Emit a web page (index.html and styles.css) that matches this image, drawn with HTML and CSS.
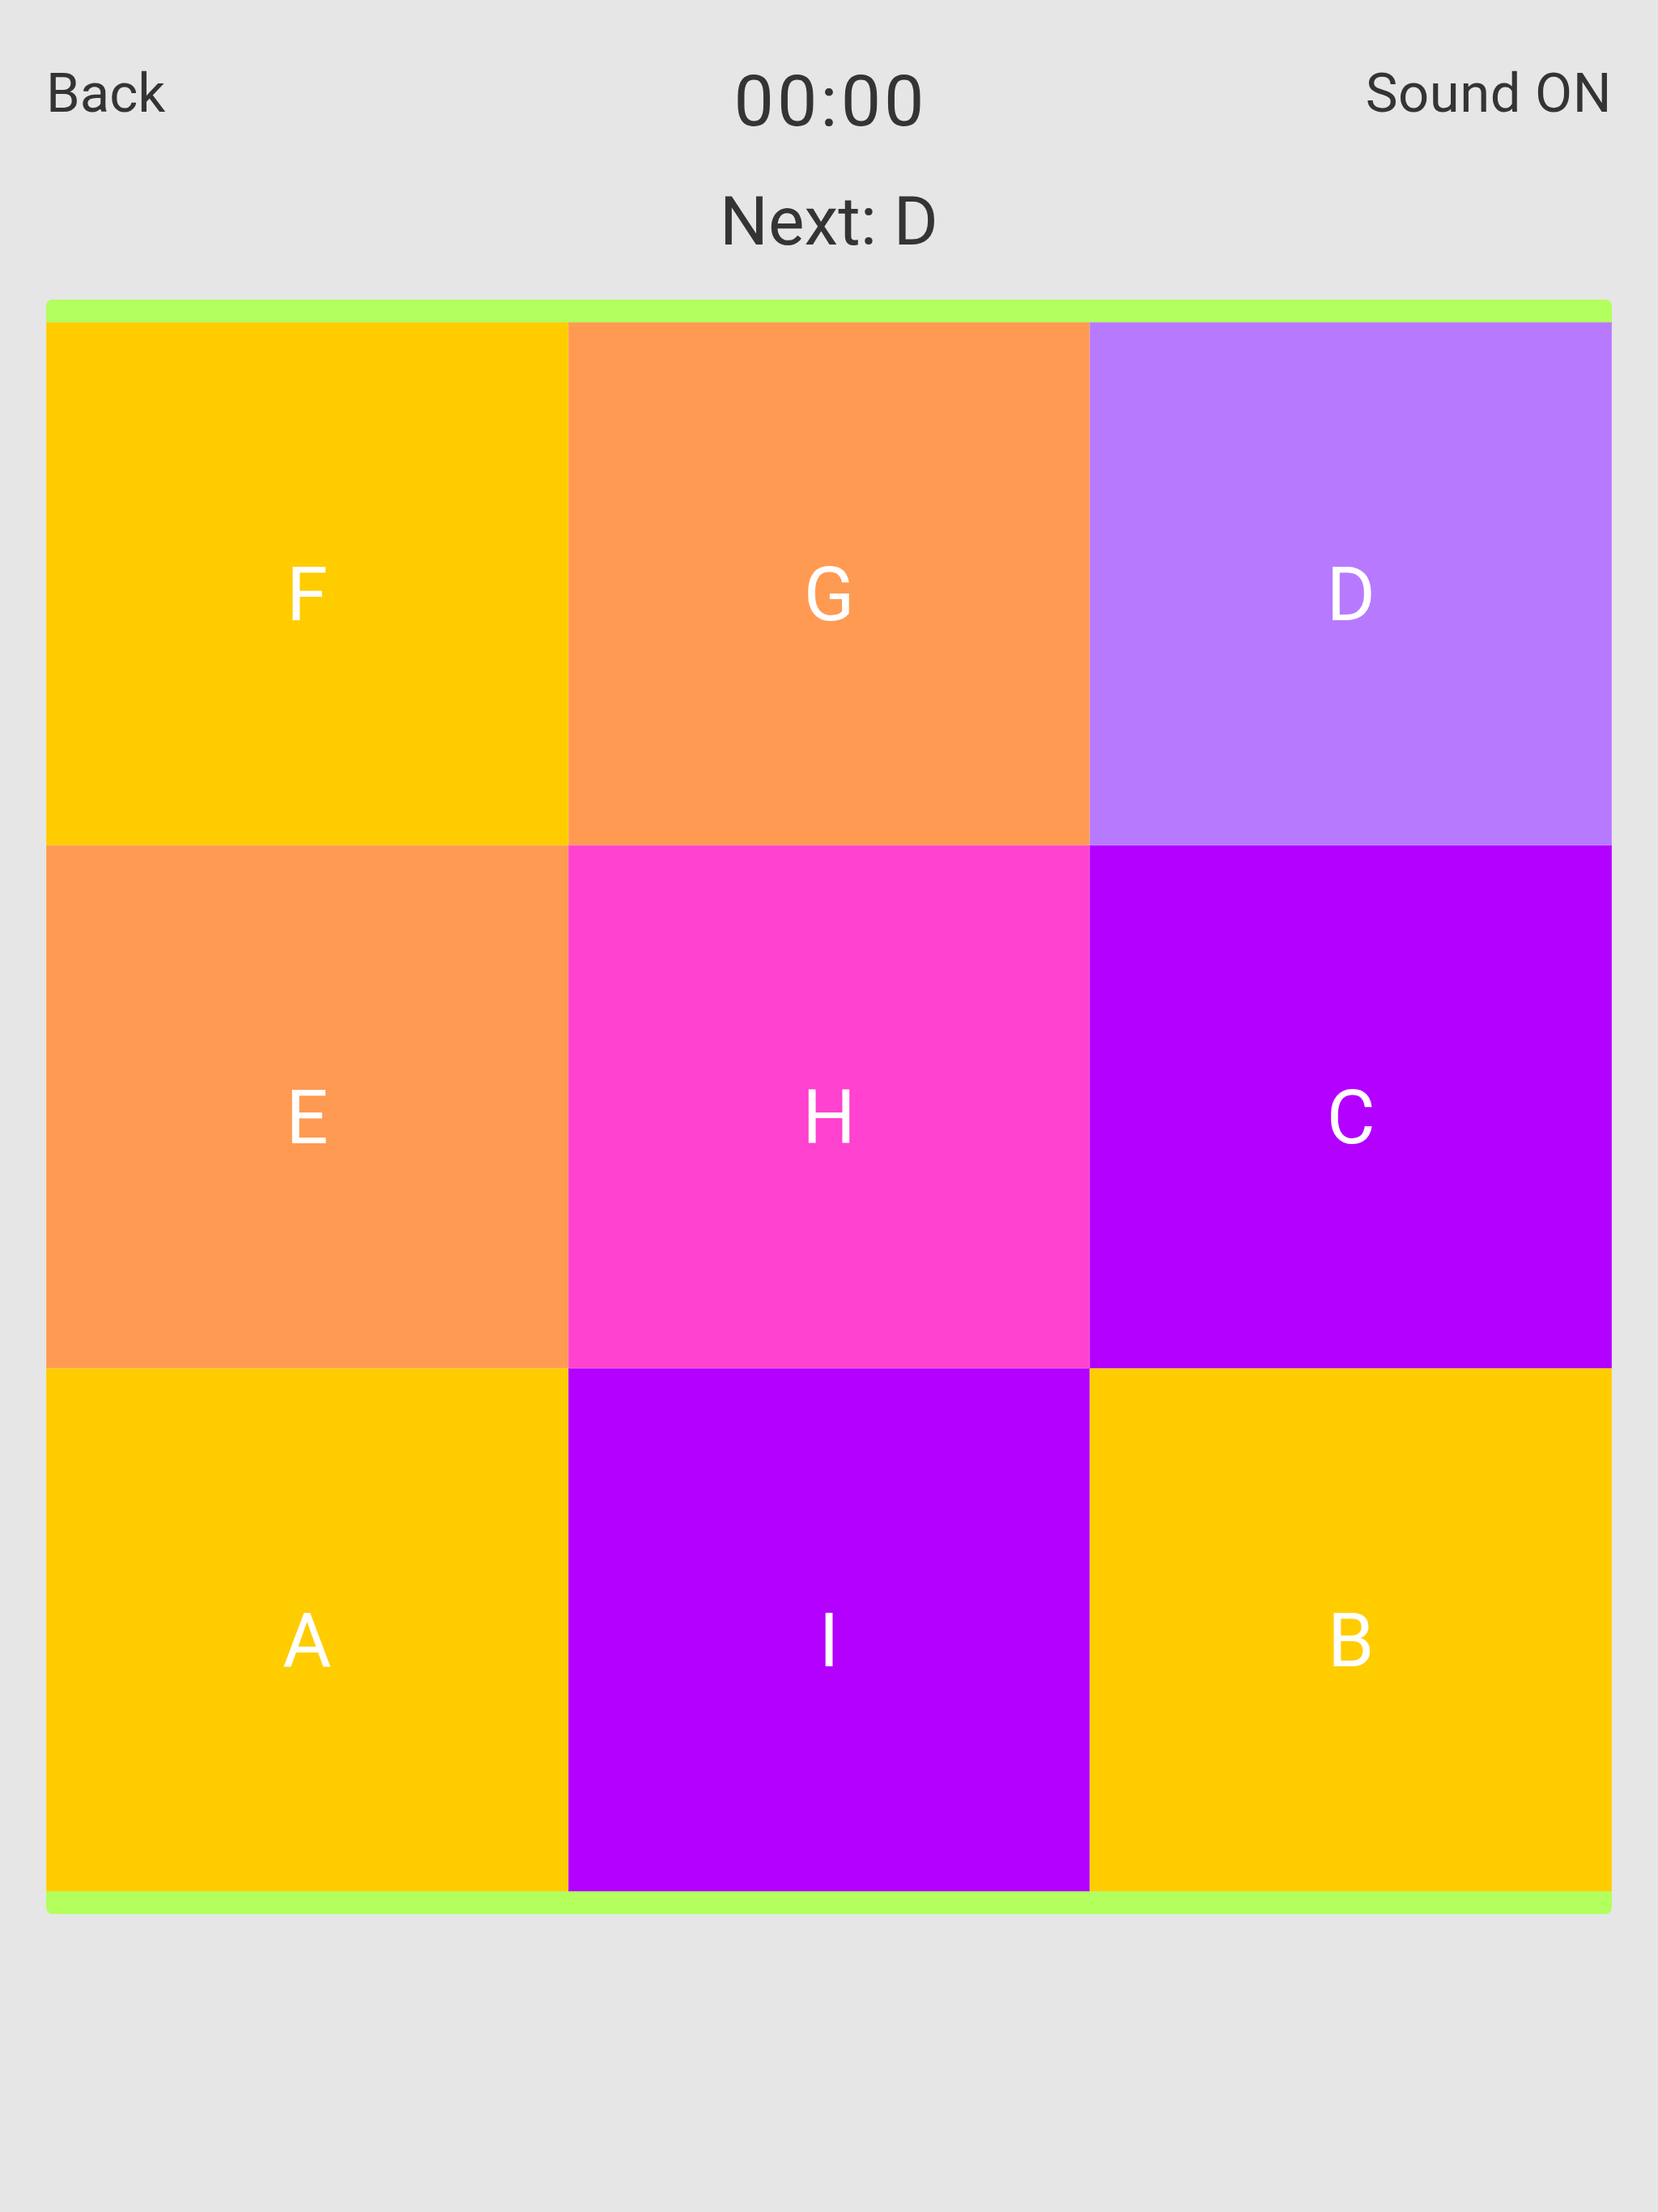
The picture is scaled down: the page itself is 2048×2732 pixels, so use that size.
FILE: index.html
```html
<!DOCTYPE html>
<html lang="en">
<head>
<meta charset="utf-8">
<title>Tiles</title>
<link rel="stylesheet" href="styles.css">
</head>
<body>
<div class="page">
  <header class="topbar">
    <div class="back">Back</div>
    <div class="timer">00:00</div>
    <div class="sound">Sound ON</div>
  </header>
  <div class="next">Next: D</div>
  <div class="board">
    <div class="grid">
      <div class="tile yellow">F</div>
      <div class="tile orange">G</div>
      <div class="tile lavender">D</div>
      <div class="tile orange">E</div>
      <div class="tile pink">H</div>
      <div class="tile purple">C</div>
      <div class="tile yellow">A</div>
      <div class="tile purple">I</div>
      <div class="tile yellow">B</div>
    </div>
  </div>
</div>
</body>
</html>
```

FILE: styles.css
```css
html, body {
  margin: 0;
  padding: 0;
  background: #e6e6e6;
}
body {
  width: 2048px;
  height: 2732px;
  font-family: Roboto, "Liberation Sans", sans-serif;
  color: #343434;
}
.page {
  padding: 75px 57px 0 57px;
}
.topbar {
  display: flex;
  justify-content: space-between;
  align-items: flex-start;
}
.back, .sound {
  flex: 1 1 0;
  font-size: 67px;
  line-height: 80px;
}
.sound {
  text-align: right;
  letter-spacing: 0.5px;
}
.timer {
  font-size: 88px;
  line-height: 100px;
  letter-spacing: 4px;
  padding-left: 4px;
  text-align: center;
}
.next {
  margin-top: 49px;
  font-size: 84px;
  line-height: 100px;
  text-align: center;
}
.board {
  margin-top: 46px;
  background: #b2ff5d;
  border-radius: 8px;
  padding: 28px 0;
}
.grid {
  display: grid;
  grid-template-columns: repeat(3, 1fr);
  grid-template-rows: repeat(3, 646px);
}
.tile {
  display: flex;
  align-items: center;
  justify-content: center;
  padding-top: 26px;
  box-sizing: border-box;
  color: #ffffff;
  font-size: 92px;
  box-shadow: inset 0 0 0 1px rgba(255, 255, 255, 0.12);
}
.yellow { background: #ffcc00; }
.orange { background: #ff9a52; }
.lavender { background: #b77aff; }
.pink { background: #ff42cf; }
.purple { background: #b300ff; }
```
